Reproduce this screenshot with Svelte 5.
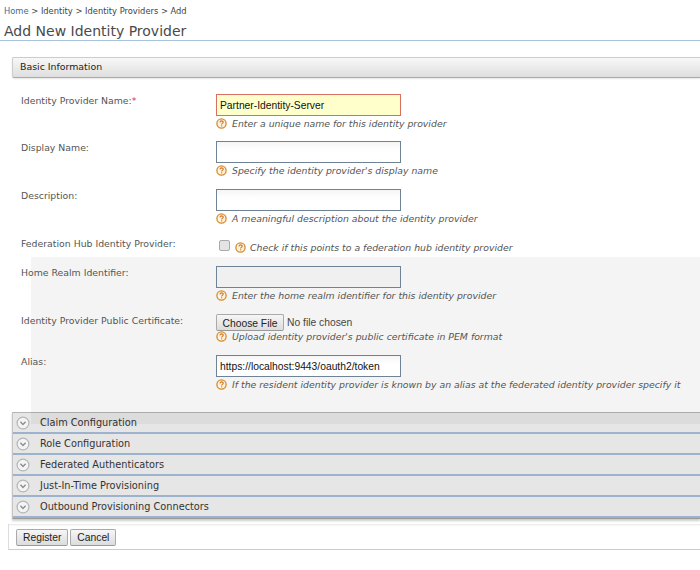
<script>
  const sections = [
    "Claim Configuration",
    "Role Configuration",
    "Federated Authenticators",
    "Just-In-Time Provisioning",
    "Outbound Provisioning Connectors"
  ];
</script>

{#snippet help()}
  <svg class="help" width="11" height="11" viewBox="0 0 11 11" aria-hidden="true">
    <circle cx="5.5" cy="5.5" r="4.6" fill="#fdf3e2" stroke="#d98a2b" stroke-width="1.3" />
    <path d="M3.9 4.3c.2-1 .9-1.4 1.7-1.4.9 0 1.6.5 1.6 1.3 0 1.2-1.6 1.1-1.6 2.2" fill="none" stroke="#c9781f" stroke-width="1.1" />
    <rect x="5.1" y="7.3" width="1.1" height="1.1" fill="#c9781f" />
  </svg>
{/snippet}

<div class="page">
  <div class="crumbs"><a href="#home">Home</a> &gt; Identity &gt; Identity Providers &gt; Add</div>
  <h1>Add New Identity Provider</h1>

  <div class="content">
    <div class="basic-head">Basic Information</div>

    <div class="form">
      <div class="row r-name">
        <span class="label">Identity Provider Name:<em>*</em></span>
        <div class="field">
          <input class="text required" type="text" value="Partner-Identity-Server" />
          <div class="hint">{@render help()}<i>Enter a unique name for this identity provider</i></div>
        </div>
      </div>
      <div class="row r-display">
        <span class="label">Display Name:</span>
        <div class="field">
          <input class="text" type="text" />
          <div class="hint">{@render help()}<i>Specify the identity provider's display name</i></div>
        </div>
      </div>
      <div class="row r-desc">
        <span class="label">Description:</span>
        <div class="field">
          <input class="text" type="text" />
          <div class="hint">{@render help()}<i>A meaningful description about the identity provider</i></div>
        </div>
      </div>
      <div class="row r-hub">
        <span class="label">Federation Hub Identity Provider:</span>
        <div class="field check">
          <input class="box" type="checkbox" />
          {@render help()}<i>Check if this points to a federation hub identity provider</i>
        </div>
      </div>
      <div class="row r-realm">
        <span class="label">Home Realm Identifier:</span>
        <div class="field">
          <input class="text blank" type="text" />
          <div class="hint">{@render help()}<i>Enter the home realm identifier for this identity provider</i></div>
        </div>
      </div>
      <div class="row r-cert">
        <span class="label">Identity Provider Public Certificate:</span>
        <div class="field">
          <div class="file"><button type="button">Choose File</button><span>No file chosen</span></div>
          <div class="hint tight">{@render help()}<i>Upload identity provider's public certificate in PEM format</i></div>
        </div>
      </div>
      <div class="row r-alias">
        <span class="label">Alias:</span>
        <div class="field">
          <input class="text" type="text" value="https://localhost:9443/oauth2/token" />
          <div class="hint">{@render help()}<i>If the resident identity provider is known by an alias at the federated identity provider specify it</i></div>
        </div>
      </div>
      <div class="shade"></div>
    </div>

    <div class="sections">
      {#each sections as s}
        <div class="section">
          <svg class="chev" width="14" height="14" viewBox="0 0 14 14" aria-hidden="true">
            <circle cx="7" cy="7" r="5.9" fill="#f4f4f4" stroke="#b5b5b5" stroke-width="1.2" />
            <path d="M4.4 5.8 7 8.5l2.6-2.7" fill="none" stroke="#8a8f96" stroke-width="1.4" />
          </svg>
          <span>{s}</span>
        </div>
      {/each}
    </div>

    <div class="buttons">
      <button type="button">Register</button>
      <button type="button">Cancel</button>
    </div>
  </div>
</div>

<style>
  :global(body) {
    margin: 0;
    background: #fff;
  }

  .page {
    width: 700px;
    height: 570px;
    overflow: hidden;
    font-family: "DejaVu Sans", Verdana, sans-serif;
    color: #555;
  }

  .crumbs {
    padding: 5px 0 0 4px;
    height: 13px;
    font-size: 8.33px;
    line-height: 13px;
    color: #444;
  }

  .crumbs a {
    color: #3a6d99;
    text-decoration: none;
  }

  h1 {
    margin: 0;
    padding: 4px 0 0 4px;
    height: 18px;
    font-size: 14px;
    line-height: 18px;
    font-weight: 400;
    color: #4a4a4a;
    border-bottom: 1px solid #a9c3da;
  }

  .content {
    padding-left: 12px;
  }

  .basic-head {
    margin-top: 16px;
    height: 19px;
    padding-left: 7px;
    font-size: 9.4px;
    line-height: 18px;
    color: #222;
    border: 1px solid #ccc;
    border-bottom: 1px solid #aaa;
    border-right: 0;
    border-radius: 2px 0 0 2px;
    background: linear-gradient(#f8f8f8, #dedede);
    box-shadow: 0 1px 2px rgba(0, 0, 0, 0.1);
  }

  .form {
    position: relative;
    margin-left: -12px;
  }

  /* grey panel sits over the first accordion row as well */
  .shade {
    position: absolute;
    left: 31px;
    right: 0;
    top: 179px;
    height: 167px;
    background: rgba(0, 0, 0, 0.043);
    z-index: 2;
    pointer-events: none;
  }

  .row {
    position: relative;
    z-index: 3;
    display: grid;
    grid-template-columns: 195px 1fr;
    box-sizing: border-box;
    padding-left: 21px;
  }

  .r-name { height: 63px; padding-top: 16px; }
  .r-display { height: 48px; }
  .r-desc { height: 48px; }
  .r-hub { height: 20px; }
  .r-realm { height: 54px; padding-top: 9px; }
  .r-cert { height: 41px; padding-top: 3px; }
  .r-alias { height: 60px; padding-top: 3px; }

  .label {
    font-size: 9.33px;
    line-height: 13px;
    color: #555;
    white-space: nowrap;
  }

  .label em {
    font-style: normal;
    color: #e03030;
  }

  .field {
    min-width: 0;
  }

  .text {
    display: block;
    box-sizing: border-box;
    width: 185px;
    height: 22px;
    margin: 0;
    padding: 0 3px;
    border: 1px solid #6f8296;
    background: linear-gradient(#f5f5f5, #fff 40%);
    font-family: "Liberation Sans", Arial, sans-serif;
    font-size: 10.3px;
    color: #111;
    outline: 0;
    border-radius: 0;
  }

  .text.required {
    border-color: #d9705f;
    background: #ffffcc;
  }

  .text.blank {
    background: #f0f0f0;
  }

  .hint {
    display: flex;
    align-items: center;
    gap: 5px;
    height: 15px;
    white-space: nowrap;
  }

  .hint.tight {
    margin-top: -2px;
  }

  i {
    font-size: 9.33px;
    color: #555;
    white-space: nowrap;
  }

  .help {
    flex: none;
  }

  .check {
    display: flex;
    align-items: center;
    gap: 5px;
    height: 20px;
    padding-left: 3px;
  }

  .check i {
    margin-left: -1px;
  }

  .box {
    appearance: none;
    box-sizing: border-box;
    width: 11px;
    height: 11px;
    margin: 0 0 3px 0;
    border: 1px solid #aaa;
    border-radius: 2px;
    background: #e4e4e4;
  }

  .file {
    display: flex;
    align-items: center;
    height: 17px;
    font-family: "Liberation Sans", Arial, sans-serif;
    font-size: 10.3px;
    color: #444;
  }

  .file span {
    margin-left: 3px;
  }

  .file button {
    width: 68px;
    padding: 1px 0 0;
  }

  button {
    box-sizing: border-box;
    height: 17px;
    padding: 0 6px;
    border: 1px solid #aaa;
    border-bottom-color: #999;
    border-radius: 2px;
    background: linear-gradient(#f6f6f6, #dcdcdc);
    font-family: "Liberation Sans", Arial, sans-serif;
    font-size: 10.3px;
    color: #222;
  }

  .sections {
    box-shadow: 0 2px 2px rgba(0, 0, 0, 0.2);
    border-top: 1px solid #b4b4b4;
    border-bottom: 1px solid #9a9a9a;
    border-left: 1px solid #c4c4c4;
  }

  .section {
    display: flex;
    align-items: center;
    gap: 10px;
    height: 19px;
    padding-left: 3px;
    background: #e6e6e6;
    border-bottom: 2px solid #9db2cc;
    font-size: 9.75px;
    color: #333;
  }

  .buttons {
    display: flex;
    gap: 2px;
    margin-top: 5px;
    margin-left: -4px;
    height: 26px;
    padding: 5px 0 0 7px;
    box-sizing: border-box;
    border-left: 1px solid #ddd;
    border-bottom: 1px solid #ccc;
    box-shadow: inset 0 2px 2px -1px rgba(0, 0, 0, 0.1);
  }
</style>
